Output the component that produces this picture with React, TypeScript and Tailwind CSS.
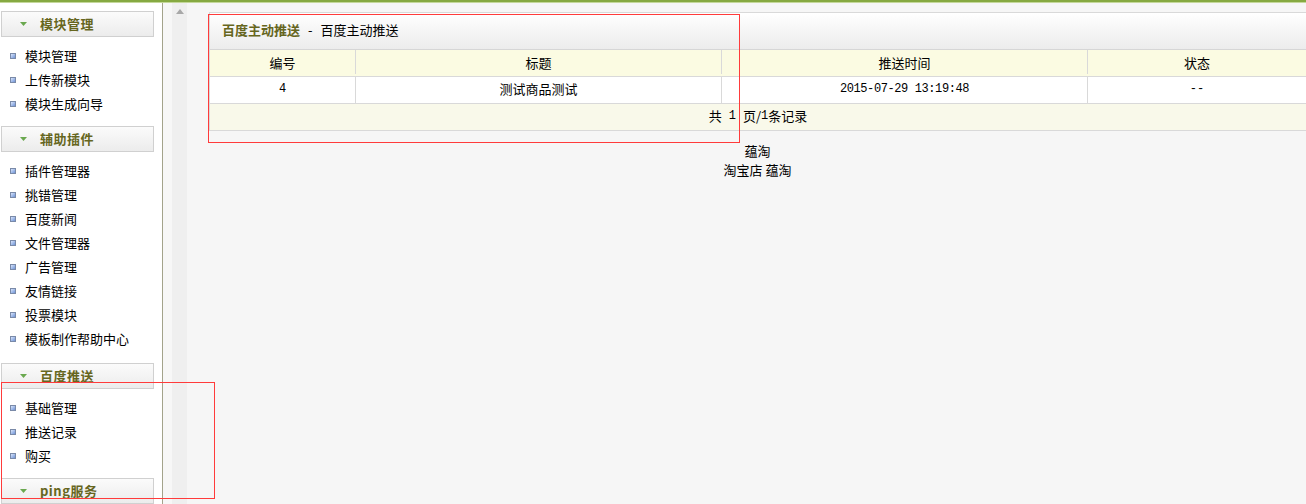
import React from 'react';

const sections = [
  { title: '模块管理', items: ['模块管理', '上传新模块', '模块生成向导'], pb: 'pb-[10px]' },
  {
    title: '辅助插件',
    items: ['插件管理器', '挑错管理', '百度新闻', '文件管理器', '广告管理', '友情链接', '投票模块', '模板制作帮助中心'],
    pb: 'pb-[12px]',
  },
  { title: '百度推送', items: ['基础管理', '推送记录', '购买'], pb: 'pb-[10px]' },
  { title: 'ping服务', items: [], pb: 'pb-0' },
];

function Arrow() {
  return (
    <svg width="7" height="4" viewBox="0 0 7 4" className="block">
      <polygon points="0,0 7,0 3.5,4" fill="#6aa84f" />
    </svg>
  );
}

function Bullet() {
  return (
    <span className="block w-[6px] h-[6px] border border-[#7a8aa8] bg-gradient-to-br from-[#dbe6fb] to-[#6f93d6] shrink-0" />
  );
}

function Sidebar() {
  return (
    <aside className="w-[163px] shrink-0 bg-white border-r border-[#a3a38b] pt-[8px] pl-px">
      {sections.map((s) => (
        <div key={s.title}>
          <div className="w-[153px] h-[26px] border border-[#d0d0d0] bg-gradient-to-b from-[#fbfbfb] to-[#ececec] flex items-center pl-[18px] gap-[13px] pb-px">
            <Arrow />
            <span className="font-bold text-[13px] text-[#66661e] tracking-[0.5px]">{s.title}</span>
          </div>
          {s.items.length > 0 && (
            <ul className={`pt-[7px] ${s.pb}`}>
              {s.items.map((it) => (
                <li key={it} className="h-[24px] flex items-center pl-[9px] gap-[9px] text-[13px] text-black">
                  <Bullet />
                  <span className="-translate-y-px">{it}</span>
                </li>
              ))}
            </ul>
          )}
        </div>
      ))}
    </aside>
  );
}

const cols = 'grid grid-cols-[146px_366px_366px_1fr]';
const mono = "font-['Liberation_Mono',monospace] text-[12px]";

function Panel() {
  return (
    <div className="border-t border-l border-[#d9d9d9]">
      <div className="h-[37px] border-b border-[#d6d6d6] bg-gradient-to-b from-white to-[#ececec] flex items-center pl-[12px] pb-[3px] text-[13px]">
        <span className="font-bold text-[#66661e]">百度主动推送</span>
        <span className="text-black mx-[8px]">-</span>
        <span className="text-black">百度主动推送</span>
      </div>
      <div className={`${cols} h-[27px] bg-[#fbfbe2] border-b border-[#d9d9d9] text-[13px] text-black pb-[2px]`}>
        <div className="flex items-center justify-center border-r border-[#d9d9d9]">编号</div>
        <div className="flex items-center justify-center border-r border-[#d9d9d9]">标题</div>
        <div className="flex items-center justify-center border-r border-[#d9d9d9]">推送时间</div>
        <div className="flex items-center justify-center">状态</div>
      </div>
      <div className={`${cols} h-[27px] bg-white border-b border-[#d9d9d9] text-[13px] text-black`}>
        <div className={`flex items-center justify-center border-r border-[#d9d9d9] pb-px ${mono}`}>4</div>
        <div className="flex items-center justify-center border-r border-[#d9d9d9] pb-[3px]">测试商品测试</div>
        <div className={`flex items-center justify-center border-r border-[#d9d9d9] pb-px ${mono} tracking-[-0.4px]`}>
          2015-07-29 13:19:48
        </div>
        <div className={`flex items-center justify-center pb-px ${mono}`}>--</div>
      </div>
      <div className="h-[27px] bg-[#f9f9ea] border-b border-[#d9d9d9] flex items-center justify-center text-[13px] text-black pb-[3px]">
        共<span className={`${mono} mx-[7px] translate-y-px`}>1</span>页/<span className={`${mono} translate-y-px`}>1</span>条记录
      </div>
    </div>
  );
}

export default function App() {
  return (
    <div className="relative w-[1306px] h-[504px] overflow-hidden bg-[#f6f6f6] font-['Noto_Sans_CJK_SC','Noto_Sans',sans-serif] text-[13px] leading-[19px]">
      <div className="h-[2px] bg-[#86a942]" />
      <div className="h-px bg-[#c4d89a]" />
      <div className="flex h-[501px]">
        <Sidebar />
        <div className="w-[9px] shrink-0 bg-[#f7f7f7]" />
        <div className="w-[15px] shrink-0 bg-[#efefef] flex justify-center pt-[6px]">
          <svg width="8" height="5" viewBox="0 0 8 5" className="block">
            <polygon points="4,0 8,5 0,5" fill="#a8a8a8" />
          </svg>
        </div>
        <main className="flex-1 pl-[22px] pt-[9px]">
          <Panel />
          <div className="mt-[10px] text-center text-black">
            <div>蕴淘</div>
            <div>淘宝店 蕴淘</div>
          </div>
        </main>
      </div>
      {/* annotation boxes */}
      <div className="absolute left-[208px] top-[14px] w-[532px] h-[129px] border border-[#ff3b3b] pointer-events-none" />
      <div className="absolute left-[1px] top-[382px] w-[214px] h-[117px] border border-[#ff3b3b] pointer-events-none" />
    </div>
  );
}
